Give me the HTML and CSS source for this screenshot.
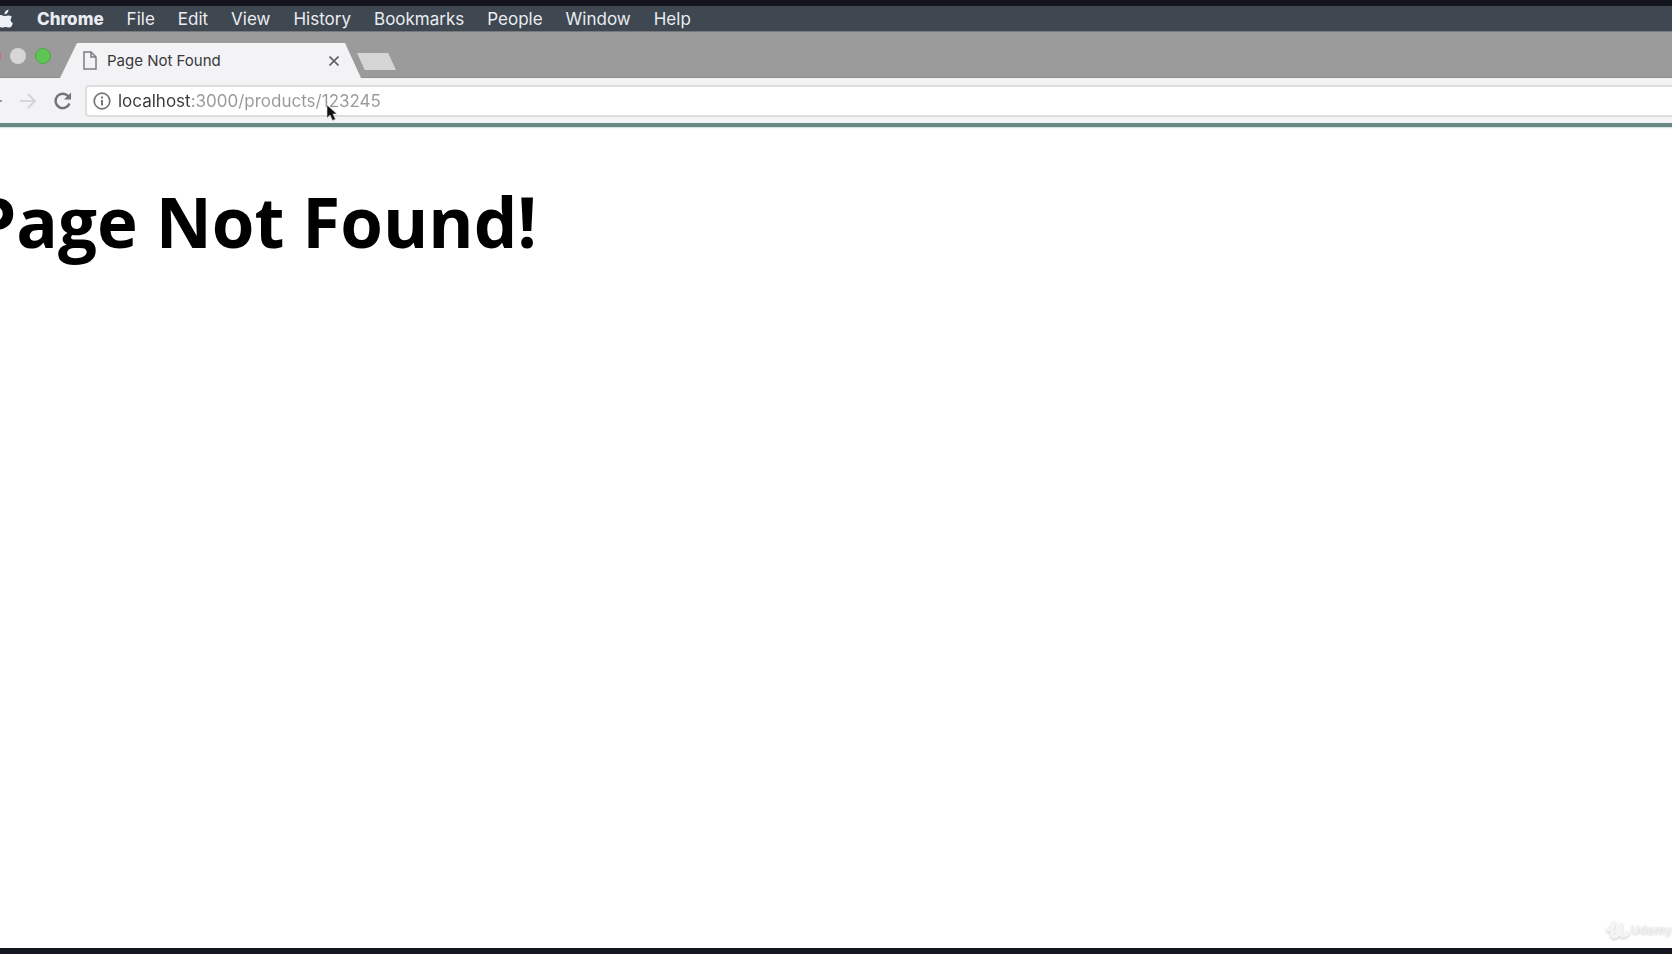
FILE: index.html
```html
<!DOCTYPE html>
<html lang="en">
<head>
<meta charset="utf-8">
<meta name="viewport" content="width=device-width, initial-scale=1">
<title>Page Not Found</title>
<link rel="stylesheet" href="styles.css">
</head>
<body>
<div class="screen">
  <nav class="menubar" aria-label="Application menu">
    <button class="apple" aria-label="Apple menu">
      <svg width="14" height="20" viewBox="0 0 14 20"><path d="M0 6C2 5.500 3 7 5 7s4-1.500 7 .8c-2 2-1.800 5 .8 6.400C12 17.500 10.500 19 8.500 18.500 6 17.500 4 18 2 18.800L0 18zM4.500 5.500C4.300 3 6 1 8.500.5 8.700 3 7 5.300 4.500 5.500z" fill="#eef1f5"/></svg>
    </button>
    <button class="menu-item app-name">Chrome</button>
    <button class="menu-item">File</button>
    <button class="menu-item">Edit</button>
    <button class="menu-item">View</button>
    <button class="menu-item">History</button>
    <button class="menu-item">Bookmarks</button>
    <button class="menu-item">People</button>
    <button class="menu-item">Window</button>
    <button class="menu-item">Help</button>
  </nav>
  <div class="tabstrip">
    <div class="lights">
      <button class="light close-window" aria-label="Close window"></button>
      <button class="light minimize" aria-label="Minimize"></button>
      <button class="light maximize" aria-label="Maximize"></button>
    </div>
    <div class="tab">
      <svg class="page-icon" width="14" height="19" viewBox="0 0 14 19" fill="none" stroke="#7c7c84" stroke-width="1.500"><path d="M1 1h7l5 5v12H1zM8 1v5h5"/></svg>
      <span class="tab-title">Page Not Found</span>
      <button class="tab-close" aria-label="Close tab">
        <svg width="10" height="10" viewBox="0 0 10 10" stroke="#606060" stroke-width="1.600"><path d="M.5.500l9 9M9.500.5l-9 9"/></svg>
      </button>
    </div>
    <button class="new-tab" aria-label="New tab"></button>
  </div>
  <div class="toolbar">
    <button class="tool back" aria-label="Back"><svg width="3" height="18" viewBox="0 0 3 18"><path d="M0 9h2" stroke="#999" stroke-width="2"/></svg></button>
    <button class="tool forward" aria-label="Forward"><svg width="18" height="18" viewBox="0 0 18 18" fill="none" stroke="#d6d6d8" stroke-width="2"><path d="M1 9h15M9 2l7 7-7 7"/></svg></button>
    <button class="tool reload" aria-label="Reload"><svg width="20" height="20" viewBox="0 0 20 20" fill="none" stroke="#747474" stroke-width="2.400"><path d="M16.500 12.500a7.200 7.200 0 1 1-1.300-7.300"/><path d="M18 1.500v7h-7z" fill="#747474" stroke="none"/></svg></button>
    <label class="address">
      <svg width="18" height="18" viewBox="0 0 18 18" fill="none" stroke="#747474" stroke-width="1.700"><circle cx="9" cy="9" r="7.800"/><path d="M9 8v5.500M9 4.500v2" stroke-width="2"/></svg>
      <input class="url" type="text" aria-label="Address" value="localhost:3000/products/123245" spellcheck="false">
    </label>
  </div>
  <main class="page">
    <h1 class="heading">Page Not Found!</h1>
  </main>
  <div class="bottom-edge"></div>
  <svg class="cursor" width="12" height="18" viewBox="0 0 12 18"><path d="M1 1v13l3-3 2.500 5.500 3-1.300L7 10h4z" fill="#111" stroke="#ddd" stroke-width=".6"/></svg>
  <div class="watermark">
    <svg width="26" height="22" viewBox="0 0 26 22" fill="none" stroke="#f4f4f4" stroke-width="4" stroke-linecap="round" stroke-linejoin="round"><path d="M3 11c3-1 5-4 6-7-2 5-3 14 0 14 4 0 6-6 7-12-1 6-1 11 2 11 2 0 3-1 5-3"/></svg>
    <span>Udemy</span>
  </div>
</div>
</body>
</html>
```
FILE: styles.css
```css
* { box-sizing: border-box; }
body { margin: 0; font-family: Inter, "Liberation Sans", sans-serif; background: #fff; }
button { margin: 0; padding: 0; border: 0; background: none; font: inherit; color: inherit; flex: none; }
svg { display: block; }
.screen { position: relative; display: flex; flex-direction: column; min-height: 100vh; overflow: hidden; border-top: 6px solid #14151d; }
.menubar { display: flex; align-items: center; gap: 23px; height: 25px; background: #3f4750; color: #e9edf2; font-size: 17px; line-height: 24px; text-shadow: 0 0 1px currentColor; }
.apple { width: 14px; }
.app-name { font-weight: 800; }
.tabstrip { display: flex; align-items: flex-end; height: 47px; background: #9b9b9b; border-top: 1px solid #77797c; border-bottom: 1px solid #8c8c8c; }
.lights { display: flex; gap: 9px; margin-left: -15px; padding-bottom: 13px; }
.light { width: 16px; height: 16px; border-radius: 50%; }
.close-window { background: #e0605a; }
.minimize { background: #d6d6d6; }
.maximize { background: #5fc454; border: 1px solid #4aa943; }
.tab { display: flex; align-items: center; width: 301px; height: 35px; margin: 0 0 -1px 9px; padding: 0 22px 0 23px; background: #f3f3f5; clip-path: polygon(17px 0, 285px 0, 100% 100%, 0 100%); }
.tab-title { flex: 1; margin-left: 10px; font-size: 15px; line-height: 20px; color: #38383c; }
.new-tab { width: 39px; height: 17px; margin: 0 0 7px -4px; background: #d5d5d5; clip-path: polygon(0 0, 80% 0, 100% 100%, 20% 100%); }
.toolbar { display: flex; align-items: center; height: 49px; background: #f3f3f5; border-bottom: 4px solid #688781; box-shadow: 0 1px 1px #d5e5e2; }
.forward { margin-left: 16px; }
.reload { margin-left: 16px; }
.address { display: flex; align-items: center; flex: 1; height: 32px; margin-left: 12px; padding-left: 6px; background: #fff; border: 2px solid #dedede; border-right: 0; border-radius: 4px 0 0 4px; }
.url { flex: 1; min-width: 0; margin: 0 0 0 7px; padding: 0; border: 0; outline: 0; font: 17px/24px Inter, "Liberation Sans", sans-serif; color: #8f8f93; background: linear-gradient(90deg, #38383c 74px, #98989c 74px); -webkit-background-clip: text; background-clip: text; -webkit-text-fill-color: transparent; }
.page { flex: 1; padding-top: 46px; }
.heading { margin: 0 0 0 -27px; font: 700 69px/96px "Open Sans", sans-serif; color: #000; white-space: nowrap; }
.bottom-edge { height: 6px; background: #14171f; }
.cursor { position: absolute; left: 326px; top: 98px; }
.watermark { position: absolute; right: 0; bottom: 13px; display: flex; align-items: center; color: #f0f0f0; font-size: 12px; font-weight: 600; line-height: 22px; filter: drop-shadow(0 1px 1px #ccc); }
```
